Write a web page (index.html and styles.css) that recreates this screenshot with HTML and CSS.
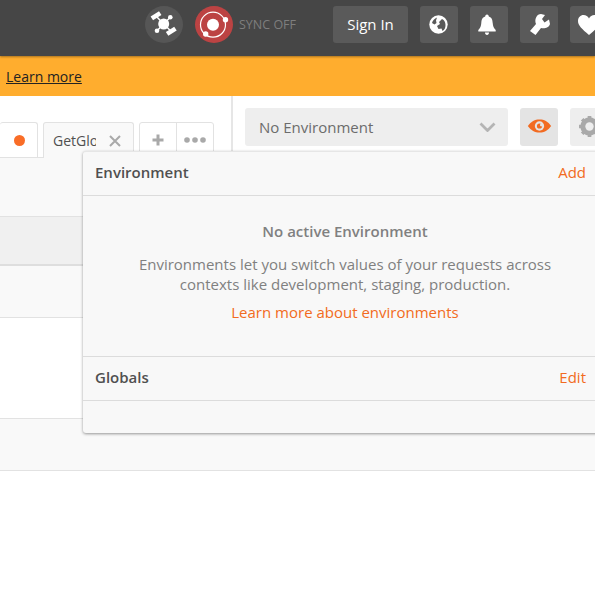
FILE: index.html

```html
<!DOCTYPE html>
<html lang="en">
<head>
  <meta charset="UTF-8" />
  <meta name="viewport" content="width=device-width, initial-scale=1.0" />
  <title>Environments</title>
  <link rel="stylesheet" href="styles.css">
</head>
<body>
  <header class="topbar">
    <span class="round-btn">
      <svg width="38" height="37" viewBox="0 0 38 37">
        <path d="M18.700 18L11 10M18.700 18L26.300 25.500M18.700 18L25.300 11.300M18.700 18L12 24.700" stroke="#fff" stroke-width="1.500"/>
        <g fill="#fff">
          <circle cx="18.700" cy="18" r="5.500"/>
          <rect x="6" y="7.500" width="10" height="4.500" transform="rotate(-33 11 9.700)"/>
          <rect x="21.300" y="23" width="10" height="4.500" transform="rotate(-33 26.300 25.300)"/>
          <circle cx="25.300" cy="11.300" r="2.300"/>
          <circle cx="12" cy="24.700" r="2.300"/>
        </g>
      </svg>
    </span>
    <span class="round-btn sync">
      <svg width="38" height="37" viewBox="0 0 38 37">
        <circle cx="18" cy="18.700" r="12.500" fill="none" stroke="#fff" stroke-width="1.200"/>
        <circle cx="18" cy="18.700" r="6" fill="#fff"/>
        <circle cx="30.500" cy="13.700" r="2.700" fill="#fff"/>
        <circle cx="10.700" cy="28" r="2.700" fill="#fff"/>
      </svg>
    </span>
    <span class="sync-label">SYNC OFF</span>
    <button class="btn signin">Sign In</button>
    <button class="btn">
      <svg width="20" height="20" viewBox="0 0 20 20">
        <circle cx="9.500" cy="9.500" r="9.200" fill="#fff"/>
        <path d="M8 2.500C5.500 3.500 3.500 5.500 3 8l2.500 1.500L7.500 8 7 5.500z" fill="#5a5a5a"/>
        <path d="M13 4l-3 3 1 2-3 2 1.500 3 3-.5 1 2.500c2-1 3-3 3-6 0-2.500-1-5-3.500-6z" fill="#5a5a5a"/>
      </svg>
    </button>
    <button class="btn">
      <svg class="bell" width="20" height="22" viewBox="0 0 20 22">
        <path d="M10 0.500c1.200 0 1.800 1 1.800 2 3 .8 3.700 3.500 3.900 6.500.2 3 1 5 3 7v1.500H1.300V16c2-2 2.800-4 3-7 .2-3 .9-5.700 3.900-6.500 0-1 .6-2 1.800-2z" fill="#fff"/>
        <path d="M8 18.500h4c0 1.500-.8 2.500-2 2.500s-2-1-2-2.500z" fill="#fff"/>
      </svg>
    </button>
    <button class="btn">
      <svg class="wrench" width="24" height="24" viewBox="0 0 24 24">
        <path d="M12 1L16 2 13 6 15.500 9.500 20 6.500 21 11C20 15 15 16 12 15L6.500 22 1 18 7 11C5 6 8 1 12 1z" fill="#fff"/>
      </svg>
    </button>
    <button class="btn">
      <svg width="24" height="22" viewBox="0 0 24 22">
        <path d="M12 21C5 15 1 11.500 1 7c0-3.500 2.500-6 5.500-6C9 1 11 2.500 12 4.500 13 2.500 15 1 17.500 1 20.500 1 23 3.500 23 7c0 4.500-4 8-11 14z" fill="#fff"/>
      </svg>
    </button>
  </header>

  <div class="notice"><a href="#">Learn more</a></div>

  <main class="workspace">
    <div class="top-row">
      <div class="tabs-pane">
        <div class="tab tab-first"><span class="dot"></span></div>
        <div class="tab tab-active">
          <span class="tab-title">GetGlobalVars</span>
          <svg class="tab-close" width="12" height="12" viewBox="0 0 12 12">
            <path d="M1 1l10 10M11 1L1 11" stroke="#a9a9a9" stroke-width="2"/>
          </svg>
        </div>
        <div class="tab-tools">
          <span class="tool">
            <svg width="12" height="12" viewBox="0 0 12 12"><path d="M6 .5v11M.5 6h11" stroke="#a9a9a9" stroke-width="3"/></svg>
          </span>
          <span class="tool">
            <svg width="22" height="6" viewBox="0 0 22 6"><g fill="#a9a9a9"><circle cx="3" cy="3" r="2.800"/><circle cx="11" cy="3" r="2.800"/><circle cx="19" cy="3" r="2.800"/></g></svg>
          </span>
        </div>
      </div>
      <div class="env-pane">
        <div class="env-select">
          <span>No Environment</span>
          <svg width="17" height="10" viewBox="0 0 17 10"><path d="M1.500 1.500l7 7 7-7" fill="none" stroke="#b4b4b4" stroke-width="2.800"/></svg>
        </div>
        <span class="icon-btn active">
          <svg width="25" height="14" viewBox="0 0 26 15">
            <path d="M.5 7.500C4 2.500 8 .5 13 .5s9 2 12.500 7C22 12.500 18 14.500 13 14.500S4 12.500 .5 7.500z" fill="#f26b21"/>
            <circle cx="13" cy="7.500" r="5" fill="#e4e4e4"/>
            <circle cx="13" cy="7.500" r="2.800" fill="#f26b21"/>
            <circle cx="15" cy="6.500" r="1.500" fill="#e4e4e4"/>
          </svg>
        </span>
        <span class="icon-btn">
          <svg width="23" height="23" viewBox="0 0 22 22">
            <circle cx="11" cy="11" r="6.500" fill="none" stroke="#a9a9a9" stroke-width="4.500"/>
            <path d="M11 1v20M1 11h20M4 4l14 14M18 4L4 18" stroke="#a9a9a9" stroke-width="3.500"/>
            <circle cx="11" cy="11" r="4" fill="#eee"/>
          </svg>
        </span>
      </div>
    </div>

    <div class="row row-tint row-first"></div>
    <div class="row row-head"></div>
    <div class="row row-tint row-short"></div>
    <div class="row row-tall"></div>
    <div class="row row-tint row-short"></div>

    <section class="env-popup">
      <div class="popup-row">
        <h3>Environment</h3>
        <a href="#">Add</a>
      </div>
      <div class="popup-empty">
        <h4>No active Environment</h4>
        <p>Environments let you switch values of your requests across<br>contexts like development, staging, production.</p>
        <a href="#">Learn more about environments</a>
      </div>
      <div class="popup-row">
        <h3>Globals</h3>
        <a href="#">Edit</a>
      </div>
      <div class="popup-foot"></div>
    </section>
  </main>
</body>
</html>
```

FILE: styles.css

```css
html, body { margin: 0; height: 599px; overflow: hidden; background: #fff; }
body { font-family: "Open Sans", sans-serif; font-size: 14px; color: #505050; }

.topbar { position: relative; z-index: 2; display: flex; align-items: center; height: 56px; padding-left: 145px; padding-bottom: 7px; box-sizing: border-box; background: #464646; box-shadow: 0 1px 2px rgba(0,0,0,.35); }
.topbar > * { flex-shrink: 0; }
.round-btn { width: 38px; height: 37px; border-radius: 50%; background: #565656; margin-right: 12px; }
.round-btn svg { display: block; }
.sync { background: #bc4343; margin-right: 6px; }
.sync-label { width: 94px; font-size: 12.5px; color: #7e7e7e; }
.btn { display: flex; align-items: center; justify-content: center; width: 38px; height: 37px; margin-right: 12px; padding: 0; border: 0; border-radius: 3px; background: #5a5a5a; color: #fff; font: 15px "Open Sans", sans-serif; }
.signin { width: 75px; padding-bottom: 2px; }
.bell { margin-right: 4px; }
.wrench { margin-left: 3px; }

.notice { height: 40px; line-height: 42px; padding-left: 6px; background: #ffad2e; }
.notice a { color: #222; }

.workspace { position: relative; height: 503px; overflow: hidden; }
.top-row { display: flex; height: 62px; }

.tabs-pane { display: flex; align-items: flex-end; box-sizing: border-box; width: 233px; flex-shrink: 0; border-right: 2px solid #e6e6e6; border-bottom: 1px solid #e2e2e2; }
.tab { flex-shrink: 0; box-sizing: border-box; border: 1px solid #e2e2e2; border-radius: 3px 3px 0 0; display: flex; align-items: center; }
.tab-first { width: 38px; height: 35px; margin-right: 5px; border-left: 0; border-bottom: 0; padding-left: 14px; }
.dot { width: 11px; height: 11px; border-radius: 50%; background: #f96d27; }
.tab-active { width: 91px; height: 36px; margin-bottom: -1px; border-bottom: 0; background: #f9f9f9; padding-left: 9px; margin-right: 5px; }
.tab-title { width: 43px; overflow: hidden; white-space: nowrap; }
.tab-close { margin-left: 13px; }
.tab-tools { display: flex; flex-shrink: 0; height: 35px; box-sizing: border-box; border: 1px solid #e2e2e2; border-radius: 3px 3px 0 0; }
.tool { display: flex; align-items: center; justify-content: center; width: 36px; }
.tool + .tool { border-left: 1px solid #e2e2e2; }

.env-pane { display: flex; gap: 12px; padding: 12px 0 0 12px; }
.env-pane > * { flex-shrink: 0; }
.env-select { display: flex; align-items: center; justify-content: space-between; box-sizing: border-box; width: 263px; height: 38px; padding: 0 12px 0 14px; border-radius: 3px; background: #eee; font-size: 15px; color: #6c6c6c; }
.icon-btn { display: flex; align-items: center; justify-content: center; width: 38px; height: 38px; border-radius: 3px; background: #eee; }
.icon-btn svg { margin-bottom: 2px; }
.icon-btn.active { background: #e4e4e4; }

.row { box-sizing: border-box; border-bottom: 1px solid #e2e2e2; }
.row-tint { background: #f9f9f9; }
.row-first { height: 59px; }
.row-head { height: 49px; background: #f0f0f0; border-bottom-width: 2px; border-bottom-color: #dedede; }
.row-short { height: 52px; }
.row-tall { height: 101px; }

.env-popup { position: absolute; z-index: 1; top: 55px; left: 83px; width: 524px; height: 282px; box-sizing: border-box; border-top: 1px solid #e6e6e6; border-radius: 3px; background: #f8f8f8; box-shadow: 0 1px 3px rgba(0,0,0,.4); font-size: 15px; }
.env-popup a { color: #f26b21; text-decoration: none; }
.env-popup h3 { margin: 0; font-size: 15px; font-weight: 600; color: #505050; }
.popup-row { display: flex; align-items: center; justify-content: space-between; box-sizing: border-box; height: 44px; padding: 0 9px 3px 12px; margin-right: 12px; border-bottom: 1px solid #dcdcdc; }
.popup-empty { box-sizing: border-box; height: 161px; padding-top: 25px; text-align: center; line-height: 20px; border-bottom: 1px solid #dcdcdc; color: #808080; }
.popup-empty h4 { margin: 0 0 13px; font-size: 15px; font-weight: 600; color: #808080; }
.popup-empty p { margin: 0 0 8px; }
```
